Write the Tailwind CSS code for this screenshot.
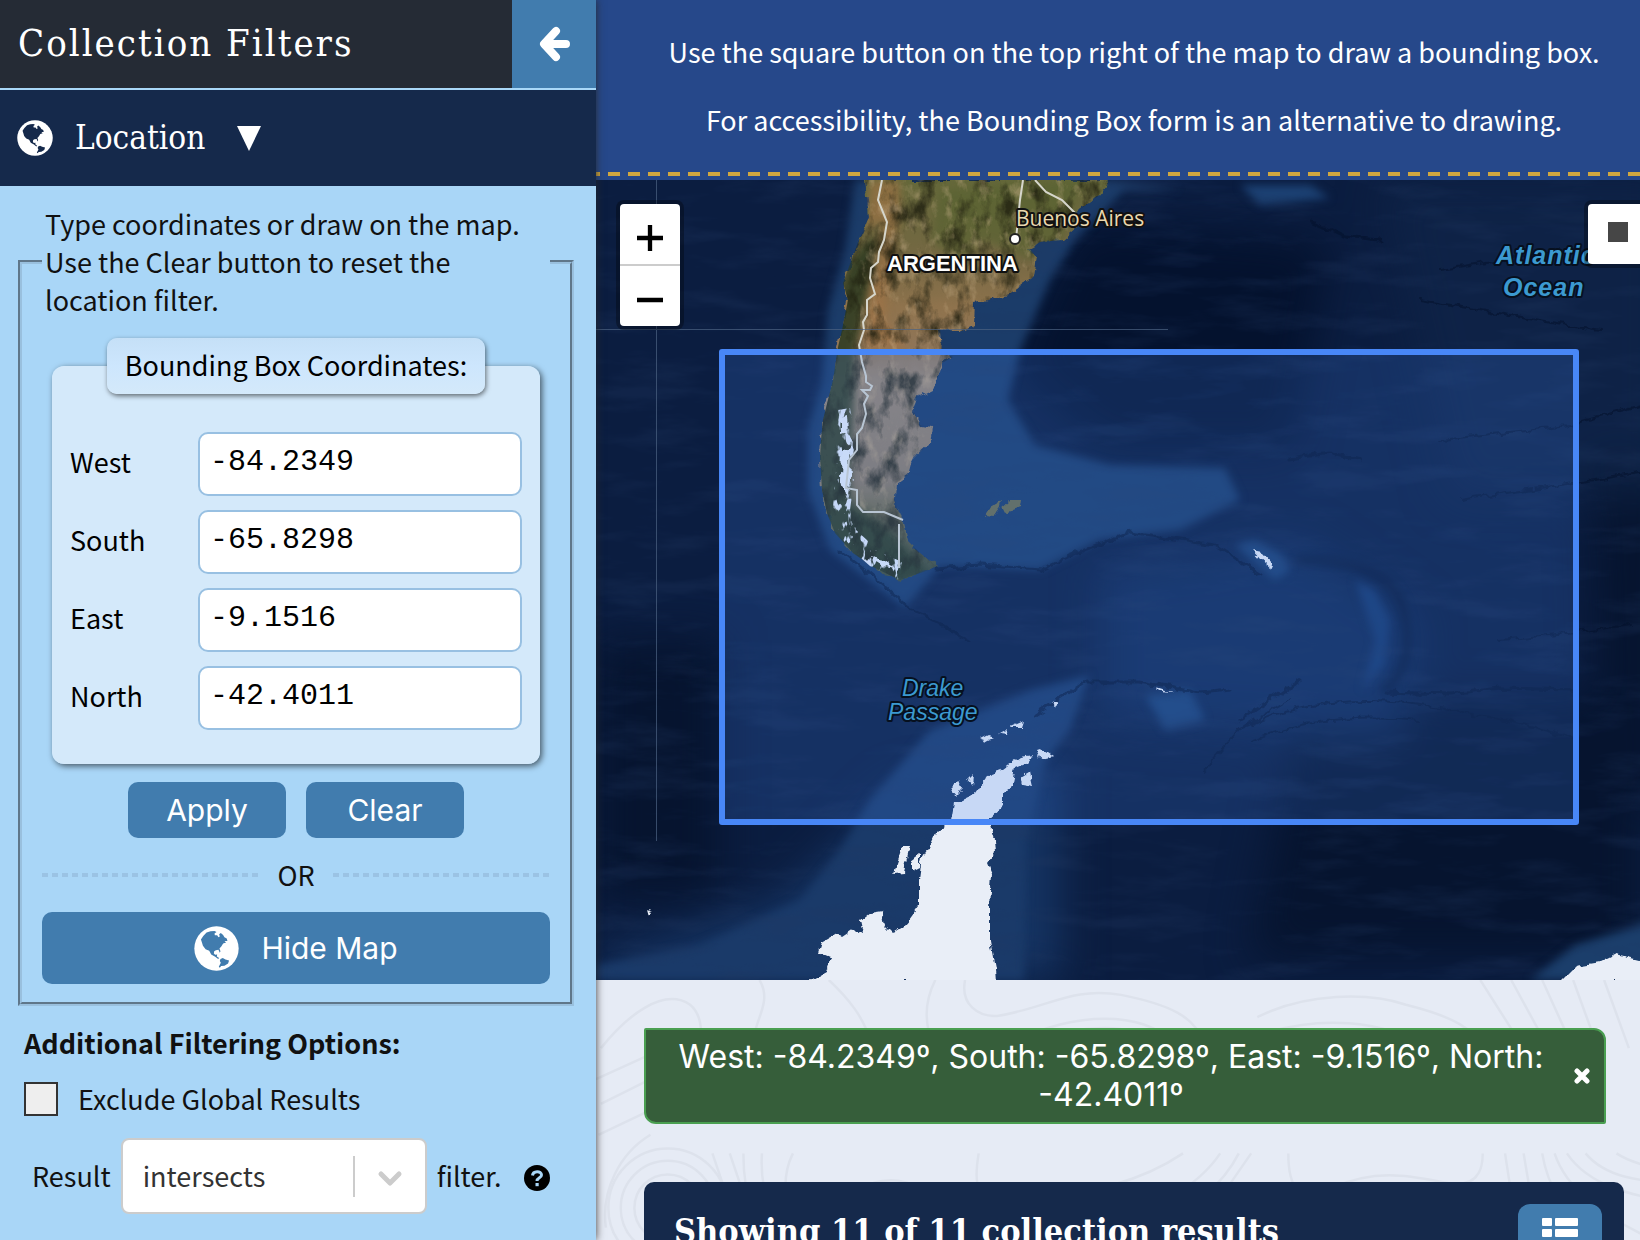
<!DOCTYPE html>
<html lang="en">
<head>
<meta charset="utf-8">
<meta name="viewport" content="width=device-width, initial-scale=1">
<title>Collection Filters</title>
<script src="https://cdn.jsdelivr.net/npm/@tailwindcss/browser@4"></script>
</head>
<body class="flex h-screen overflow-hidden bg-[#e6ebf5] font-['Noto_Sans_CJK_SC','Noto_Sans',sans-serif] text-[27px] leading-[38px] text-[#111]">

<svg class="hidden" aria-hidden="true">
  <symbol id="globe" viewBox="16 22 136 136">
    <circle cx="84" cy="90" r="67" fill="#fff"/>
    <path fill="currentColor" d="M37 63 44 52 54 42 66 38 78 37 84 40 78 45 79 50 86 50 90 56 94 54 92 47 97 43 104 49 108 56 115 60 117 67 108 67 113 72 104 75 99 83 93 90 96 98 94 103 90 94 82 95 77 98 76 105 80 109 86 108 85 114 92 119 89 122 80 115 68 108 62 97 51 92 43 82 40 72ZM96 122 103 119 111 123 122 126 119 135 108 142 98 143 94 148 91 145 97 133 94 128Z"/>
  </symbol>
</svg>

<aside class="relative z-10 flex w-[596px] shrink-0 flex-col bg-[#a9d6f7] shadow-[0_0_8px_rgba(40,40,40,0.9)]">
  <header class="flex h-[90px] shrink-0 border-b-2 border-[#a9d8f8] bg-[#252b35]">
    <h1 class="flex-1 pt-4 pl-[18px] font-['DejaVu_Serif_Condensed','DejaVu_Serif',serif] text-[38px] leading-[54px] tracking-[2px] text-white">Collection Filters</h1>
    <button type="button" aria-label="Collapse filters" class="flex w-[84px] items-center justify-center bg-[#417cae]">
      <svg class="h-9 w-8" viewBox="0 0 32 36" fill="none" stroke="#fff" stroke-width="8" stroke-linecap="round" stroke-linejoin="round"><path d="M18 5 6 18 18 31M8 18H28"/></svg>
    </button>
  </header>

  <button type="button" aria-expanded="true" class="flex h-24 shrink-0 items-center bg-[#15294b] pl-[17px] text-left text-white">
    <svg class="size-9 text-[#15294b]"><use href="#globe"/></svg>
    <span class="ml-[22px] font-['DejaVu_Serif_Condensed','DejaVu_Serif',serif] text-[33px]">Location</span>
    <svg class="ml-8 h-[25px] w-6" viewBox="0 0 24 25"><path fill="#fff" d="M0 0H24L12 25Z"/></svg>
  </button>

  <div class="flex flex-col pt-[19px] pr-[22px] pl-[18px]">
    <fieldset class="border-4 border-[#99c0de] px-5 pb-[18px]" style="border-style:groove">
      <legend class="w-full px-[3px]">Type coordinates or draw on the map.<br>Use the Clear button to reset the<br>location filter.</legend>

      <fieldset class="mx-[10px] mt-[19px] rounded-xl bg-[#d4e9fa] px-[18px] pb-[34px] text-black shadow-[2px_2px_6px_rgba(0,0,0,0.6)]">
        <legend class="mx-auto rounded-[10px] bg-linear-to-b from-[#c5e0f7] via-[#cde6fd] to-[#d4e9fa] px-[18px] pt-2 pb-[10px] shadow-[1px_2px_5px_rgba(0,0,0,0.55)]">Bounding Box Coordinates:</legend>
        <div class="mt-[38px] grid grid-cols-[128px_1fr] items-center gap-y-[14px]">
          <label for="west" class="pb-1">West</label>
          <input id="west" value="-84.2349" class="h-16 w-full rounded-[10px] border-2 border-[#98c0e2] bg-white px-[10px] pb-1 font-['Liberation_Mono',monospace] text-[30px]">
          <label for="south" class="pb-1">South</label>
          <input id="south" value="-65.8298" class="h-16 w-full rounded-[10px] border-2 border-[#98c0e2] bg-white px-[10px] pb-1 font-['Liberation_Mono',monospace] text-[30px]">
          <label for="east" class="pb-1">East</label>
          <input id="east" value="-9.1516" class="h-16 w-full rounded-[10px] border-2 border-[#98c0e2] bg-white px-[10px] pb-1 font-['Liberation_Mono',monospace] text-[30px]">
          <label for="north" class="pb-1">North</label>
          <input id="north" value="-42.4011" class="h-16 w-full rounded-[10px] border-2 border-[#98c0e2] bg-white px-[10px] pb-1 font-['Liberation_Mono',monospace] text-[30px]">
        </div>
      </fieldset>

      <div class="mt-[18px] flex justify-center gap-5 font-[Inter,sans-serif] text-[30px] text-white">
        <button type="button" class="h-14 w-[158px] rounded-[10px] bg-[#417cae]">Apply</button>
        <button type="button" class="h-14 w-[158px] rounded-[10px] bg-[#417cae]">Clear</button>
      </div>

      <div class="mt-[18px] flex items-center gap-[18px]">
        <div class="h-1 flex-1 bg-[repeating-linear-gradient(90deg,#9bc3e4_0_6px,transparent_6px_10px)]"></div>
        <span>OR</span>
        <div class="h-1 flex-1 bg-[repeating-linear-gradient(90deg,#9bc3e4_0_6px,transparent_6px_10px)]"></div>
      </div>

      <button type="button" class="mt-[18px] flex h-[72px] w-full items-center justify-center gap-[22px] rounded-[10px] bg-[#417cae] font-[Inter,sans-serif] text-[30px] text-white">
        <svg class="size-[45px] text-[#417cae]"><use href="#globe"/></svg>
        Hide Map
      </button>
    </fieldset>

    <h2 class="mt-[18px] pl-[6px] font-bold">Additional Filtering Options:</h2>
    <div class="mt-[18px] flex items-center gap-5 pl-[6px]">
      <input id="global" type="checkbox" class="size-[34px] appearance-none border-2 border-[#333] bg-[#eee]">
      <label for="global">Exclude Global Results</label>
    </div>
    <div class="mt-5 flex items-center pl-[14px]">
      <label for="relation">Result</label>
      <div class="relative ml-[10px] w-[306px]">
        <select id="relation" class="h-[76px] w-full appearance-none rounded-lg border-2 border-[#ccc] bg-white pl-5 text-[#333]"><option>intersects</option></select>
        <svg class="pointer-events-none absolute top-0 right-0 h-[76px] w-[76px]" viewBox="0 0 76 76" fill="none" stroke="#ccc"><path stroke-width="2" d="M3 18V59"/><path stroke-width="5" stroke-linecap="round" stroke-linejoin="round" d="M30 36 39 45 48 36"/></svg>
      </div>
      <span class="ml-[10px]">filter.</span>
      <button type="button" aria-label="Help" class="mt-1 ml-[22px] size-[26px]">
        <svg class="size-[26px]" viewBox="0 0 26 26"><circle cx="13" cy="13" r="13"/><path fill="none" stroke="#a9d6f7" stroke-width="3" d="M8.500 10.500C9 5.500 17.500 5.500 17.500 10 17.500 13 13 12.500 13 16"/><path fill="#a9d6f7" d="M11.500 18h3.200v3.200h-3.200z"/></svg>
      </button>
    </div>
  </div>
</aside>

<main class="relative flex min-w-0 flex-1 flex-col overflow-hidden">
  <div class="-mr-8 flex h-[180px] shrink-0 flex-col bg-[#26488a] pt-[33px] text-center text-white">
    <p>Use the square button on the top right of the map to draw a bounding box.</p>
    <p class="mt-[30px]">For accessibility, the Bounding Box form is an alternative to drawing.</p>
    <div class="mt-[33px] h-1 bg-[repeating-linear-gradient(90deg,#d0a740_0_4px,transparent_4px_12px,#d0a740_12px_20px)]"></div>
  </div>

  <section aria-label="Map" class="relative -mr-8 h-[800px] shrink-0 overflow-hidden bg-[#0b1d3d]">
    <svg class="block h-full w-full" viewBox="596 180 1076 800" preserveAspectRatio="xMinYMin slice" color-interpolation-filters="sRGB">
      <defs>
        <filter id="soft" x="-20%" y="-20%" width="140%" height="140%"><feGaussianBlur stdDeviation="4"/></filter>
        <filter id="wide" x="-30%" y="-30%" width="160%" height="160%"><feGaussianBlur stdDeviation="22"/></filter>
        <filter id="ragged" x="-5%" y="-5%" width="110%" height="110%"><feTurbulence type="fractalNoise" baseFrequency="0.09" numOctaves="3" seed="4" result="n"/><feDisplacementMap in="SourceGraphic" in2="n" scale="9" xChannelSelector="R" yChannelSelector="G"/><feGaussianBlur stdDeviation="0.600"/></filter>
        <filter id="grain" x="0" y="0" width="100%" height="100%"><feTurbulence type="fractalNoise" baseFrequency="0.060 0.035" numOctaves="5" seed="8"/><feColorMatrix values="0 0 0 0 0.12  0 0 0 0 0.12  0 0 0 0 0.06  3 0 0 0 -1.400"/></filter>
        <filter id="glints" x="0" y="0" width="100%" height="100%"><feTurbulence type="fractalNoise" baseFrequency="0.090 0.060" numOctaves="4" seed="3"/><feColorMatrix values="0 0 0 0 0.800  0 0 0 0 0.700  0 0 0 0 0.550  3 0 0 0 -1.600"/></filter>
        <filter id="snow" x="0" y="0" width="100%" height="100%"><feTurbulence type="fractalNoise" baseFrequency="0.130 0.070" numOctaves="3" seed="13"/><feColorMatrix values="0 0 0 0 0.900  0 0 0 0 0.930  0 0 0 0 0.980  10 0 0 0 -5.600"/></filter>
        <filter id="seafloor" x="0" y="0" width="100%" height="100%"><feTurbulence type="fractalNoise" baseFrequency="0.010 0.045" numOctaves="5" seed="21"/><feColorMatrix values="0 0 0 0 0.13  0 0 0 0 0.22  0 0 0 0 0.38  3 0 0 0 -1.400"/></filter>
        <linearGradient id="land" x1="0" y1="180" x2="0" y2="580" gradientUnits="userSpaceOnUse"><stop offset="0" stop-color="#65683a"/><stop offset="0.200" stop-color="#756843"/><stop offset="0.320" stop-color="#8f734d"/><stop offset="0.420" stop-color="#8f7558"/><stop offset="0.500" stop-color="#98856f"/><stop offset="0.750" stop-color="#8c7c68"/><stop offset="0.830" stop-color="#706a4c"/><stop offset="1" stop-color="#3c4a34"/></linearGradient>
        <clipPath id="coast"><path d="M865 180 869 217 857 245 843 283 848 300 842 330 838 347 833 380 823 420 821 440 820 457 822 490 827 513 835 533 853 553 873 567 900 580 920 573 938 567 920 553 907 540 902 520 895 500 896 483 908 475 912 460 930 443 932 427 920 425 913 410 917 398 933 390 938 377 942 363 953 357 942 353 940 328 962 331 974 325 975 303 1009 295 1033 277 1036 257 1029 248 1040 242 1063 240 1077 228 1075 213 1097 197 1111 180Z"/></clipPath>
        <clipPath id="icefields"><path d="M838 410 850 408 856 440 854 480 850 510 856 530 880 552 902 562 898 580 870 566 846 545 832 520 836 470Z"/></clipPath>
      </defs>

      <rect x="596" y="180" width="1076" height="800" fill="#0b1d40"/>
      <g filter="url(#wide)">
        <path fill="#04122e" d="M1080 220 1330 240 1290 450 1110 450 1010 370Z"/>
        <path fill="#06142f" d="M1300 700H1640V960H1250ZM596 640H720V900H596ZM1590 460H1672V800H1600Z"/>
        <path fill="#112a55" d="M1100 570 1300 540 1420 620 1400 740 1100 720Z"/>
        <path fill="#10264b" d="M1380 180H1672V500H1450Z" opacity="0.600"/>
        <path fill="#153463" d="M596 960 780 900 900 790 1060 760 1060 980H596Z"/>
      </g>
      <g filter="url(#soft)">
        <path fill="#1b3c69" d="M855 180 845 250 828 310 822 380 808 430 808 490 830 550 905 608 940 566 1040 570 1100 540 1180 530 1240 500 1225 468 1110 465 1035 445 1008 400 1020 350 1050 280 1075 240 1125 190 1180 190 1110 180Z"/>
        <path fill="#1a3a69" d="M596 965 700 945 800 900 840 850 870 800 930 730 1030 690 1090 675 1070 730 1046 760 1026 840 1024 980H596Z"/>
        <path fill="#1c4173" d="M1235 545 1255 540 1282 555 1290 570 1275 580ZM1145 695 1190 690 1205 720 1165 730ZM1240 185H1310L1330 198 1260 205Z"/>
        <path fill="#16386c" d="M1355 580 1375 590 1390 620 1385 665 1362 690 1375 640Z"/>
        <path fill="#1b3e6b" d="M1530 980 1575 945 1640 925 1672 910V980Z"/>
      </g>
      <rect x="596" y="180" width="1076" height="800" filter="url(#seafloor)" opacity="0.280"/>
      <g fill="none" stroke="#03102a" opacity="0.500" stroke-linecap="round" stroke-linejoin="round">
        <path stroke-width="9" filter="url(#soft)" d="M1300 560Q1380 560 1400 600 1420 660 1385 690"/>
        <g filter="url(#ragged)">
          <path stroke-width="3" d="M937 569 980 565 1040 570 1070 556 1130 533 1215 545 1262 575M1385 692 1450 694 1500 688 1576 690M1035 715 1085 682 1140 682 1200 693 1230 690M1240 720 1270 700 1300 680M840 550 910 608 970 640M1290 458 1330 452 1360 460M1310 220 1345 236 1380 240"/>
          <path stroke-width="2" d="M1240 730Q1320 690 1420 705T1576 740M1250 740Q1330 710 1420 720M1440 270 1560 250M1440 440 1570 425 1660 400M1460 500 1660 470M1500 640 1576 632 1630 625M1205 770 1240 730 1290 700M1420 300 1600 330"/>
        </g>
      </g>

      <g filter="url(#ragged)">
        <path fill="url(#land)" d="M865 180 869 217 857 245 843 283 848 300 842 330 838 347 833 380 823 420 821 440 820 457 822 490 827 513 835 533 853 553 873 567 900 580 920 573 938 567 920 553 907 540 902 520 895 500 896 483 908 475 912 460 930 443 932 427 920 425 913 410 917 398 933 390 938 377 942 363 953 357 942 353 940 328 962 331 974 325 975 303 1009 295 1033 277 1036 257 1029 248 1040 242 1063 240 1077 228 1075 213 1097 197 1111 180Z"/>
        <path fill="#6b6c4c" d="M985 515 990 507 1002 500 1000 508 994 516ZM1003 506 1010 500 1021 500 1020 507 1012 510 1008 516Z"/>
        <g fill="#e9eef7">
          <path d="M808 982 826 972 831 957 819 952 822 942 836 934 842 938 854 930 863 933 860 920 869 913 882 911 885 927 892 934 903 927 911 918 919 907 919 880 922 857 931 843 936 832 951 820 954 803 976 793 990 773 1004 768 1019 757 1033 755 1029 762 1015 768 1011 787 1002 793 1002 807 988 820 994 840 995 853 988 863 992 873 990 907 990 940 995 967 996 982Z"/>
          <path d="M950 790 960 780 963 788 955 796ZM967 780 973 774 972 786ZM1020 778 1030 772 1033 786 1022 784ZM1036 750 1042 748 1054 756 1040 759ZM893 873 902 846 910 846 904 872ZM912 860 920 854 920 868 912 872ZM980 740 988 736 994 738 986 742ZM999 734 1008 729 1006 735ZM1010 727 1024 721 1022 727ZM1051 701 1059 701 1057 706ZM1560 982 1576 966 1600 962 1616 954 1640 960 1672 956V982ZM647 908 652 910 649 915Z"/>
          <path d="M1252 551 1262 553 1272 564 1270 568 1260 560ZM1156 688 1166 691 1174 693 1160 692Z"/>
        </g>
      </g>
      <g clip-path="url(#coast)">
        <path filter="url(#soft)" fill="#2c3a20" d="M868 240 878 240 868 300 856 350 852 440 850 500 890 530 930 575 860 590 810 520 810 400 835 300 850 260Z" opacity="0.850"/>
        <path filter="url(#soft)" fill="#a07346" d="M870 180 900 180 900 215 892 260 885 320 910 350 866 350 868 300 884 220 866 230Z" opacity="0.650"/>
        <path filter="url(#soft)" fill="#54612f" d="M940 190 1080 180 1060 245 1030 260 985 240 960 260 930 240Z" opacity="0.550"/>
        <rect x="800" y="180" width="330" height="420" filter="url(#grain)" opacity="0.800"/>
        <rect x="860" y="180" width="270" height="330" filter="url(#glints)" opacity="0.450"/>
      </g>
      <g clip-path="url(#icefields)"><rect x="820" y="400" width="100" height="190" filter="url(#snow)"/></g>
      <path filter="url(#ragged)" fill="#eaf0fa" d="M841 418 847 416 848 432 841 434ZM842 450 849 446 850 480 846 500 841 480ZM870 557 885 560 896 568 884 566Z"/>
      <g fill="none" stroke="#d6d6cc" stroke-width="2">
        <path d="M882 180 878 200 887 222 884 240 879 252 878 262 871 268 870 278 875 294 867 300 867 315 863 322 864 330 859 345 862 362 866 376 866 382 872 386 870 390 862 390 868 396 864 404 866 414 862 428 857 434 857 450 849 460 846 488 857 490 857 505 863 512 884 512 903 520M899 524V568M1023 180 1020 200 1016 239M1035 180 1046 192 1062 200 1075 213"/>
      </g>
      <path stroke="#4d6383" stroke-width="1" opacity="0.700" d="M596 329.500H1168M656.500 180V841"/>

      <rect x="722" y="352" width="854" height="470" fill="#3f80f0" fill-opacity="0.200" stroke="#4887f7" stroke-width="6" stroke-linejoin="round"/>

      <circle cx="1015" cy="239" r="5" fill="#fff" stroke="#222" stroke-width="2"/>
      <g stroke="#111" stroke-width="4" stroke-linejoin="round" paint-order="stroke">
        <text x="1016" y="226" fill="#ead9b0" font-family="Open Sans, sans-serif" font-weight="500" font-size="21">Buenos Aires</text>
        <text x="887" y="271" fill="#fff" font-family="Liberation Sans, sans-serif" font-weight="700" font-size="22">ARGENTINA</text>
      </g>
      <g fill="#3c9ad0" stroke="#06101f" stroke-width="4" stroke-linejoin="round" paint-order="stroke" font-family="Liberation Sans, sans-serif" font-style="italic" font-weight="700">
        <text x="1496" y="264" font-size="25" letter-spacing="1">Atlantic</text>
        <text x="1503" y="296" font-size="25" letter-spacing="1">Ocean</text>
        <text x="902" y="696" font-size="23" font-weight="400">Drake</text>
        <text x="888" y="720" font-size="23" font-weight="400">Passage</text>
      </g>
    </svg>

    <div class="absolute top-6 left-6 flex w-[60px] flex-col overflow-hidden rounded bg-white shadow-[0_0_0_4px_rgba(0,0,0,0.3)]">
      <button type="button" aria-label="Zoom in" class="flex h-[62px] items-center justify-center border-b-2 border-[#ccc]"><svg class="mt-2 size-[26px]" viewBox="0 0 24 24" stroke="#000" stroke-width="4"><path d="M0 12H24M12 0V24"/></svg></button>
      <button type="button" aria-label="Zoom out" class="flex h-[60px] items-center justify-center"><svg class="mt-2 size-[26px]" viewBox="0 0 24 24" stroke="#000" stroke-width="4"><path d="M0 12H24"/></svg></button>
    </div>
    <button type="button" aria-label="Draw a rectangle" class="absolute top-6 right-6 flex size-[60px] items-center justify-center rounded bg-white shadow-[0_0_0_4px_rgba(0,0,0,0.3)]"><span class="mb-1 size-5 bg-[#464646]"></span></button>
  </section>

  <section class="relative flex-1 px-12 pt-12">
    <svg class="absolute inset-0 h-full w-full" viewBox="596 980 1044 260" preserveAspectRatio="xMinYMin slice" fill="none" stroke="#dde2ec" stroke-width="2" aria-hidden="true">
      <path d="M600 1035C620 1010 650 985 672 1000 684 1010 680 1028 682 1040M596 1060 640 1040M728 980C740 1000 720 1015 724 1035M784 980C800 995 812 1010 818 1030M870 980C860 1000 862 1015 868 1035M894 980C890 1000 905 1010 920 1009 960 1003 980 985 1020 992 1060 1000 1080 1010 1086 1030M935 1030C980 1005 1040 1005 1060 1030M950 1030C990 1014 1030 1016 1045 1030M1130 1010C1170 990 1220 990 1250 1000 1290 1010 1305 1020 1312 1035M1130 1025C1180 1008 1230 1012 1270 1035M1310 980 1345 1035M1335 980 1365 1035M1360 980 1385 1035M1385 980 1405 1035M1410 980 1430 1035M1490 980 1540 1030M1505 980 1565 1030M1520 980 1585 1030M1540 980 1600 1030M1580 980C1600 1010 1620 1030 1640 1010M600 1080 640 1060M598 1105 640 1085M604 1180C600 1150 615 1120 640 1105M1606 1060C1640 1100 1640 1160 1624 1210"/>
      <circle cx="654" cy="1164" r="27"/><circle cx="654" cy="1164" r="38"/><circle cx="654" cy="1164" r="48"/>
      <path d="M715 1120C715 1150 722 1165 725 1185M730 1120C728 1150 738 1165 742 1185M755 1120C745 1140 748 1165 760 1185M690 1120 712 1185M704 1120 726 1185M805 1185C800 1150 815 1140 840 1142 900 1155 890 1165 915 1185M905 1120C900 1150 905 1155 925 1156 1000 1155 1040 1140 1070 1120M990 1185C1040 1170 1080 1150 1100 1120M1040 1185C1070 1170 1100 1150 1115 1120M1080 1185 1125 1120M1155 1120C1155 1150 1165 1160 1190 1148 1230 1130 1260 1140 1290 1145 1310 1145 1312 1130 1312 1120M1185 1185C1210 1150 1260 1145 1285 1185M1330 1120 1340 1185M1345 1120 1356 1185M1360 1120C1365 1150 1380 1170 1400 1185M1370 1120C1380 1150 1410 1170 1440 1185M1380 1120C1400 1150 1440 1155 1490 1165 1530 1175 1570 1175 1590 1120M1395 1120C1420 1150 1470 1140 1510 1150 1560 1160 1575 1150 1580 1120M1420 1120C1450 1140 1560 1150 1575 1120"/>
    </svg>
    <div class="relative mr-[-14px] flex items-center rounded-tl-[2px] rounded-tr-xl rounded-br-[2px] rounded-bl-xl border-2 border-[#4a9f51] bg-[#365e3a] py-2 pr-[14px] pl-[30px] font-[Inter,sans-serif] text-[32px] text-white">
      <p class="flex-1 text-center">West: -84.2349º, South: -65.8298º, East: -9.1516º, North: -42.4011º</p>
      <button type="button" aria-label="Remove filter" class="ml-7 size-4 shrink-0"><svg class="size-4" viewBox="0 0 16 16" stroke="#fff" stroke-width="5" stroke-linecap="round"><path d="M3 3 13 13M13 3 3 13"/></svg></button>
    </div>
    <div class="relative mt-[58px] mr-[-32px] flex h-[120px] items-start justify-between rounded-[10px] bg-[#15294b] pt-[22px] pr-[22px] pl-[30px]">
      <h2 class="pt-2 font-['DejaVu_Serif_Condensed','DejaVu_Serif',serif] text-[34px] font-bold text-white">Showing 11 of 11 collection results</h2>
      <button type="button" aria-label="List view" class="flex h-16 w-[84px] justify-center rounded-xl bg-[#417cae] pt-[14px]"><svg class="h-[30px] w-9" viewBox="0 0 36 30" fill="#fff"><path d="M1 0h8q1 0 1 1v6q0 1-1 1H1Q0 8 0 7V1q0-1 1-1ZM14 0h21q1 0 1 1v6q0 1-1 1H14q-1 0-1-1V1q0-1 1-1ZM1 11h8q1 0 1 1v6q0 1-1 1H1q-1 0-1-1v-6q0-1 1-1ZM14 11h21q1 0 1 1v6q0 1-1 1H14q-1 0-1-1v-6q0-1 1-1ZM1 22h8q1 0 1 1v6q0 1-1 1H1q-1 0-1-1v-6q0-1 1-1ZM14 22h21q1 0 1 1v6q0 1-1 1H14q-1 0-1-1v-6q0-1 1-1Z"/></svg></button>
    </div>
  </section>
</main>
</body>
</html>
